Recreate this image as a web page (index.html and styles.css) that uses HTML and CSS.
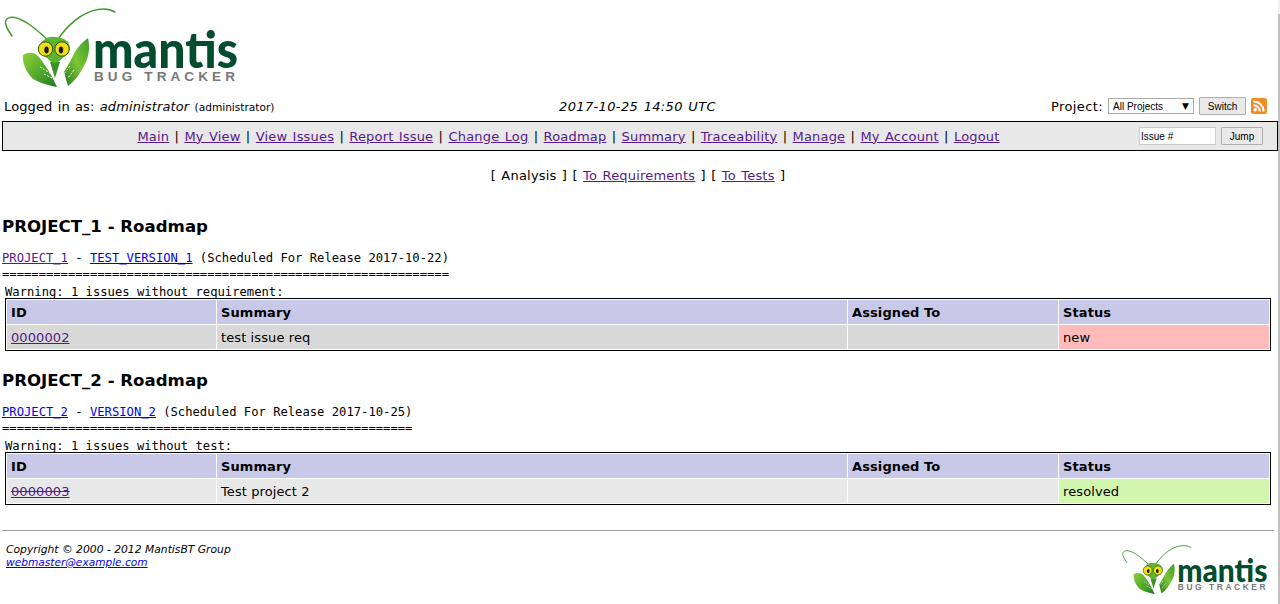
FILE: index.html
```html
<!DOCTYPE html>
<html lang="en">
<head>
<meta charset="utf-8">
<title>MantisBT - Roadmap</title>
<link rel="stylesheet" href="styles.css">
</head>
<body>
<svg class="defs" width="0" height="0" aria-hidden="true">
  <defs>
    <linearGradient id="leafL" x1="0" y1="0" x2="1" y2="1">
      <stop offset="0" stop-color="#8fcf3c"/><stop offset="0.55" stop-color="#4fa82a"/><stop offset="1" stop-color="#23791f"/>
    </linearGradient>
    <linearGradient id="leafR" x1="1" y1="0" x2="0" y2="1">
      <stop offset="0" stop-color="#3f9d2a"/><stop offset="0.5" stop-color="#7cc436"/><stop offset="1" stop-color="#23791f"/>
    </linearGradient>
    <symbol id="mantis-logo" viewBox="0 0 240 90">
      <path d="M48 40C38 31 26 20 15 17.500C8 16 4 20 6 25C7 29 10 33 12 36" fill="none" stroke="#3f9d2a" stroke-width="1.500" stroke-linecap="round"/>
      <path d="M57 41C66 26 82 12 98 9.500C104 8.500 110 9 115 12" fill="none" stroke="#3f9d2a" stroke-width="1.500" stroke-linecap="round"/>
      <path d="M23 55C28 52 34 52 38 56C44 63 50 72 57 87C46 85 37 82 32 78C26 72 22 62 23 55Z" fill="url(#leafL)"/>
      <path d="M88 38C90 47 89 56 85 64C80 74 75 81 68 86C66 80 65 75 64 72L71 60C75 50 81 43 88 38Z" fill="url(#leafR)"/>
      <path d="M40 67L50 73M44 74L52 78M70 66L64 74M74 70L68 78" stroke="#ffffff" stroke-width="1" stroke-dasharray="2 1.500" fill="none"/>
      <path d="M50 62L55 78L60 62Z" fill="#3f8f28"/>
      <path d="M44 40C47 37 51 36.500 54 37C58 37 64 38 68 42C71 46 70 53 65 56C62 58 60 61 58 62C55 63 52 63 50 61C48 58 45 57 42 55C37 51 38 44 44 40Z" fill="#5cb531"/>
      <circle cx="45.500" cy="49" r="7.200" fill="#f2de10" stroke="#2c4d12" stroke-width="1"/>
      <circle cx="62" cy="49" r="7.200" fill="#f2de10" stroke="#2c4d12" stroke-width="1"/>
      <ellipse cx="46.500" cy="50" rx="2.200" ry="3.400" fill="#1a1a0a"/>
      <ellipse cx="61" cy="50" rx="2.200" ry="3.400" fill="#1a1a0a"/>
      <text class="logo-word" x="93" y="68" textLength="145" lengthAdjust="spacingAndGlyphs">mantis</text>
      <text class="logo-sub" x="94" y="81" textLength="141" lengthAdjust="spacing">BUG TRACKER</text>
    </symbol>
  </defs>
</svg>

<header class="logo-row">
  <a class="logo-link" href="#main"><svg class="logo" role="img" aria-label="Mantis Bug Tracker"><use href="#mantis-logo"/></svg></a>
</header>

<div class="login-row">
  <div class="login-info">Logged in as: <em>administrator</em> <small>(administrator)</small></div>
  <div class="login-date">2017-10-25 14:50 UTC</div>
  <form class="project-form">
    <label class="project-label">Project:</label>
    <span class="select-wrap"><select class="project-select"><option>All Projects</option></select></span>
    <button class="btn" type="button">Switch</button>
    <a class="rss" href="#rss" aria-label="RSS">
      <svg width="16" height="16" viewBox="0 0 16 16">
        <rect width="16" height="16" rx="2.500" fill="#f08a24"/>
        <circle cx="4.200" cy="11.800" r="1.700" fill="#fff"/>
        <path d="M2.500 7.200a6.300 6.300 0 0 1 6.300 6.300M2.500 3.400a10.100 10.100 0 0 1 10.100 10.100" fill="none" stroke="#fff" stroke-width="2"/>
      </svg>
    </a>
  </form>
</div>

<nav class="menu">
  <div class="menu-links">
    <a class="v" href="#main">Main</a> | <a class="v" href="#view">My View</a> | <a class="v" href="#issues">View Issues</a> | <a class="v" href="#report">Report Issue</a> | <a class="v" href="#log">Change Log</a> | <a class="v" href="#road">Roadmap</a> | <a class="v" href="#sum">Summary</a> | <a class="v" href="#trace">Traceability</a> | <a class="v" href="#manage">Manage</a> | <a class="v" href="#account">My Account</a> | <a class="v" href="#logout">Logout</a>
  </div>
  <form class="jump-form">
    <input class="jump-input" type="text" value="Issue #">
    <button class="btn btn-jump" type="button">Jump</button>
  </form>
</nav>

<div class="subnav">[ Analysis ] [ <a class="v" href="#req">To Requirements</a> ] [ <a class="v" href="#tests">To Tests</a> ]</div>

<main>
  <section class="roadmap">
    <h2 class="project-title">PROJECT_1 - Roadmap</h2>
    <div class="mono"><a class="v" href="#p1">PROJECT_1</a> - <a href="#tv1">TEST_VERSION_1</a> (Scheduled For Release 2017-10-22)</div>
    <div class="mono">=============================================================</div>
    <div class="mono warning">Warning: 1 issues without requirement:</div>
    <table class="issues">
      <colgroup><col class="c-id"><col class="c-sum"><col class="c-as"><col class="c-st"></colgroup>
      <thead><tr><th>ID</th><th>Summary</th><th>Assigned To</th><th>Status</th></tr></thead>
      <tbody><tr class="row-dark"><td><a class="v" href="#2">0000002</a></td><td>test issue req</td><td></td><td class="st-new">new</td></tr></tbody>
    </table>
  </section>

  <section class="roadmap second">
    <h2 class="project-title">PROJECT_2 - Roadmap</h2>
    <div class="mono"><a href="#p2">PROJECT_2</a> - <a href="#v2">VERSION_2</a> (Scheduled For Release 2017-10-25)</div>
    <div class="mono">========================================================</div>
    <div class="mono warning">Warning: 1 issues without test:</div>
    <table class="issues">
      <colgroup><col class="c-id"><col class="c-sum"><col class="c-as"><col class="c-st"></colgroup>
      <thead><tr><th>ID</th><th>Summary</th><th>Assigned To</th><th>Status</th></tr></thead>
      <tbody><tr class="row-light"><td><a class="v strike" href="#3">0000003</a></td><td>Test project 2</td><td></td><td class="st-resolved">resolved</td></tr></tbody>
    </table>
  </section>
</main>

<hr class="rule">
<footer class="footer">
  <address class="copy">Copyright © 2000 - 2012 MantisBT Group<br><a class="mail" href="#mail">webmaster@example.com</a></address>
  <svg class="logo-small" role="img" aria-label="Mantis Bug Tracker"><use href="#mantis-logo"/></svg>
</footer>
<div class="scrollbar" aria-hidden="true"><div class="scroll-thumb"></div></div>
</body>
</html>
```
FILE: styles.css
```css
html, body { margin: 0; padding: 0; height: 604px; overflow: hidden; background: #fff; }
body { font-family: "DejaVu Sans", Verdana, sans-serif; font-size: 13px; color: #000; }
a { color: #0000ee; text-decoration: underline; }
a.v { color: #551a8b; }
.defs { display: block; height: 0; }
.logo-row { height: 97px; }
.logo-link { display: block; width: 240px; height: 90px; }
.logo { display: block; width: 240px; height: 90px; }
.logo-word { font-family: Lato, "Open Sans", sans-serif; font-weight: 900; font-size: 52px; fill: #034d2e; }
.logo-sub { font-family: "Liberation Sans", sans-serif; font-weight: 700; font-size: 13.500px; fill: #77787a; }

.login-row { display: grid; grid-template-columns: 1fr 1fr 1fr; align-items: center; height: 18px; padding: 0 13px 0 4px; }
.login-info { letter-spacing: 0.120px; word-spacing: 1px; }
.login-info small { font-size: 10.600px; letter-spacing: 0; word-spacing: 0; }
.login-date { text-align: center; font-style: italic; letter-spacing: 0.350px; word-spacing: 1px; padding-left: 4px; }
.project-form { display: flex; align-items: center; justify-content: flex-end; gap: 5px; margin: 0; }
.project-label { letter-spacing: 0.400px; }
.select-wrap { position: relative; display: block; width: 86px; height: 16px; }
.select-wrap::after { content: "▼"; position: absolute; right: 5px; top: 3px; font: 9px "DejaVu Sans", sans-serif; pointer-events: none; }
.project-select { appearance: none; display: block; box-sizing: border-box; width: 86px; height: 16px; padding: 0 0 0 4px; border: 1px solid #a9a9a9; background: #fff; border-radius: 0; font: 10px "Liberation Sans", Arial, sans-serif; color: #000; }
.btn { box-sizing: border-box; height: 18px; width: 47px; padding: 0; border: 1px solid #adadad; background: #e9e9e9; border-radius: 1px; font: 10px "Liberation Sans", Arial, sans-serif; color: #000; }
.rss { display: block; width: 16px; height: 16px; }
.rss svg { display: block; }

.menu { display: flex; align-items: center; box-sizing: border-box; height: 30px; margin: 6px 2px 0; padding-right: 10px; border: 1px solid #000; border-width: 1.500px 1px; background: #e8e8e8; }
.menu-links { flex: 1; text-align: center; padding-right: 5px; letter-spacing: 0.180px; word-spacing: 1px; }
.jump-form { display: flex; align-items: center; gap: 5px; margin: 0 4px 0 0; }
.jump-input { box-sizing: border-box; width: 77px; height: 18px; padding: 0 1px; border: 1px solid #ccc; background: #fff; font: 10px "Liberation Sans", Arial, sans-serif; color: #000; }
.btn-jump { width: 42px; }

.subnav { text-align: center; margin-top: 17px; line-height: 16px; padding-right: 4px; letter-spacing: 0.200px; word-spacing: 1px; }

.roadmap { padding: 0 2px; }
.project-title { margin: 0; padding-top: 33px; font-size: 16.600px; line-height: 20px; font-weight: 700; }
.second .project-title { padding-top: 20px; }
.mono { font-family: "DejaVu Sans Mono", Consolas, monospace; font-size: 12.180px; line-height: 16px; white-space: pre; }
.project-title + .mono { margin-top: 13px; }
.warning { padding-left: 3px; margin-top: 2px; line-height: 16px; }
.issues { table-layout: fixed; width: 1266px; margin: -2px 0 0 3px; border: 1px solid #000; border-collapse: separate; border-spacing: 1px; }
.c-id { width: 209px; }
.c-sum { width: 630px; }
.c-as { width: 210px; }
.c-st { width: 210px; }
.issues th, .issues td { box-sizing: border-box; height: 24px; padding: 0 4px; text-align: left; font-size: 13px; letter-spacing: 0.100px; }
.issues th { background: #c8c8e8; font-weight: 700; }
.row-dark td { background: #d8d8d8; }
.row-light td { background: #e8e8e8; }
.row-dark .st-new { background: #ffbbbb; }
.row-light .st-resolved { background: #d2f5b0; }
.strike { text-decoration: underline line-through; }

.rule { margin: 25px 6px 0 2px; border: 0; border-top: 1px solid #9c9c9c; height: 0; }
.footer { display: flex; justify-content: space-between; align-items: flex-start; padding: 9px 11px 0 6px; }
.copy { font-size: 10.750px; line-height: 13px; font-style: italic; padding-top: 3px; }
.mail { font-size: 10.600px; }
.logo-small { display: block; width: 150px; height: 56px; }

.scrollbar { position: fixed; top: 0; right: 0; bottom: 0; width: 2px; background: #f1f1f1; }
.scroll-thumb { margin-top: 14px; height: 590px; background: #c1c1c1; }
```
